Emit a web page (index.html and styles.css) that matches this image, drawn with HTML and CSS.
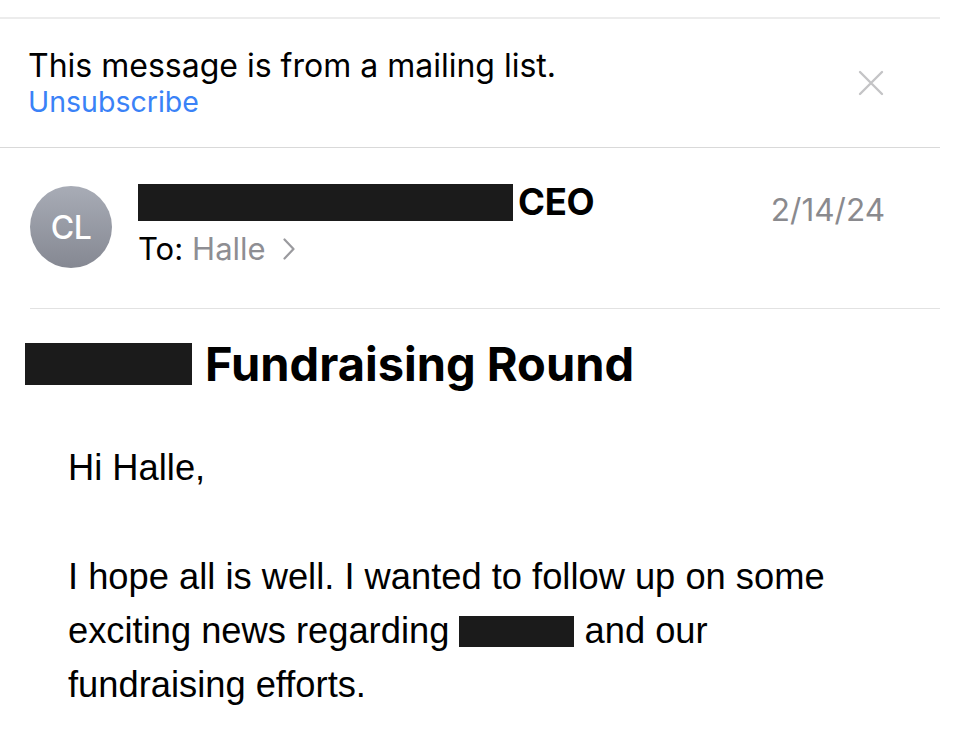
FILE: index.html
```html
<!DOCTYPE html>
<html>
<head>
<meta charset="utf-8">
<link rel="stylesheet" href="styles.css">
</head>
<body>
<div class="page">
  <div class="banner">
    <div class="banner-text">
      <div class="banner-msg">This message is from a mailing list.</div>
      <div class="banner-link">Unsubscribe</div>
    </div>
    <svg class="close" width="26" height="26" viewBox="0 0 26 26"><path d="M2 2L24 24M24 2L2 24" stroke="#c4c4c6" stroke-width="2.4" stroke-linecap="round"/></svg>
  </div>
  <div class="header">
    <div class="avatar">CL</div>
    <div class="meta">
      <div class="from"><span class="redact redact-from"></span><span class="role">CEO</span></div>
      <div class="to">To: <span class="rcpt">Halle</span> <svg class="chev" width="14" height="24" viewBox="0 0 14 24"><path d="M2.5 2.5L11.5 12L2.5 21.5" fill="none" stroke="#9a9a9e" stroke-width="2.2" stroke-linecap="round" stroke-linejoin="round"/></svg></div>
    </div>
    <div class="date">2/14/24</div>
  </div>
  <h1 class="subject"><span class="redact redact-subj"></span><span>Fundraising Round</span></h1>
  <div class="body">
    <p class="greet">Hi Halle,</p>
    <p class="para">I hope all is well. I wanted to follow up on some exciting news regarding <span class="redact redact-inline"></span> and our fundraising efforts.</p>
  </div>
</div>
</body>
</html>
```
FILE: styles.css
```css
html, body { margin: 0; padding: 0; background: #fff; }
body { font-family: "Inter", "Roboto", sans-serif; color: #000; }
.page { width: 940px; padding-top: 17px; }
.banner {
  border-top: 2px solid #ececec;
  border-bottom: 1.5px solid #d9d9d9;
  display: flex; align-items: center; justify-content: space-between;
  padding: 29px 56px 29px 28px;
  height: 70px;
}
.banner-msg { font-size: 32px; line-height: 38px; }
.banner-link { font-size: 28.5px; line-height: 34px; color: #3a82f7; }
.header {
  margin-left: 30px;
  display: flex; align-items: flex-start;
  padding: 34px 55px 0 0;
  height: 161px;
  border-bottom: 1.5px solid #e2e2e2;
  box-sizing: border-box;
}
.avatar {
  width: 82px; height: 82px; border-radius: 50%;
  background: linear-gradient(#a8acb6, #858892);
  color: #fff; font-size: 32px; font-weight: 500;
  display: flex; align-items: center; justify-content: center;
  margin-top: 4px; letter-spacing: -0.5px;
}
.meta { margin-left: 26px; flex: 1; }
.from { display: flex; align-items: center; height: 40px; }
.redact { display: inline-block; background: #1b1b1b; }
.redact-from { width: 375px; height: 37px; }
.role { font-size: 36.5px; font-weight: 700; margin-left: 5px; letter-spacing: -0.3px; }
.to { font-size: 31px; margin-top: 8px; display: flex; align-items: center; }
.rcpt { color: #8e8e93; margin-left: 9px; }
.chev { margin-left: 16px; }
.date { font-size: 31.5px; color: #8a8a8e; margin-top: 8px; }
.subject {
  margin: 31px 0 0 25px; display: flex; align-items: center;
  font-size: 47px; font-weight: 700; line-height: 48px;
}
.redact-subj { width: 167px; height: 42px; margin-right: 13px; }
.body { padding-left: 68px; font-family: "Liberation Sans", Arial, sans-serif; font-size: 36.3px; }
.greet { margin: 60px 0 0; line-height: 40px; }
.para { margin: 62px 0 0; line-height: 54px; width: 780px; }
.redact-inline { width: 115px; height: 31px; vertical-align: -4px; }
```
